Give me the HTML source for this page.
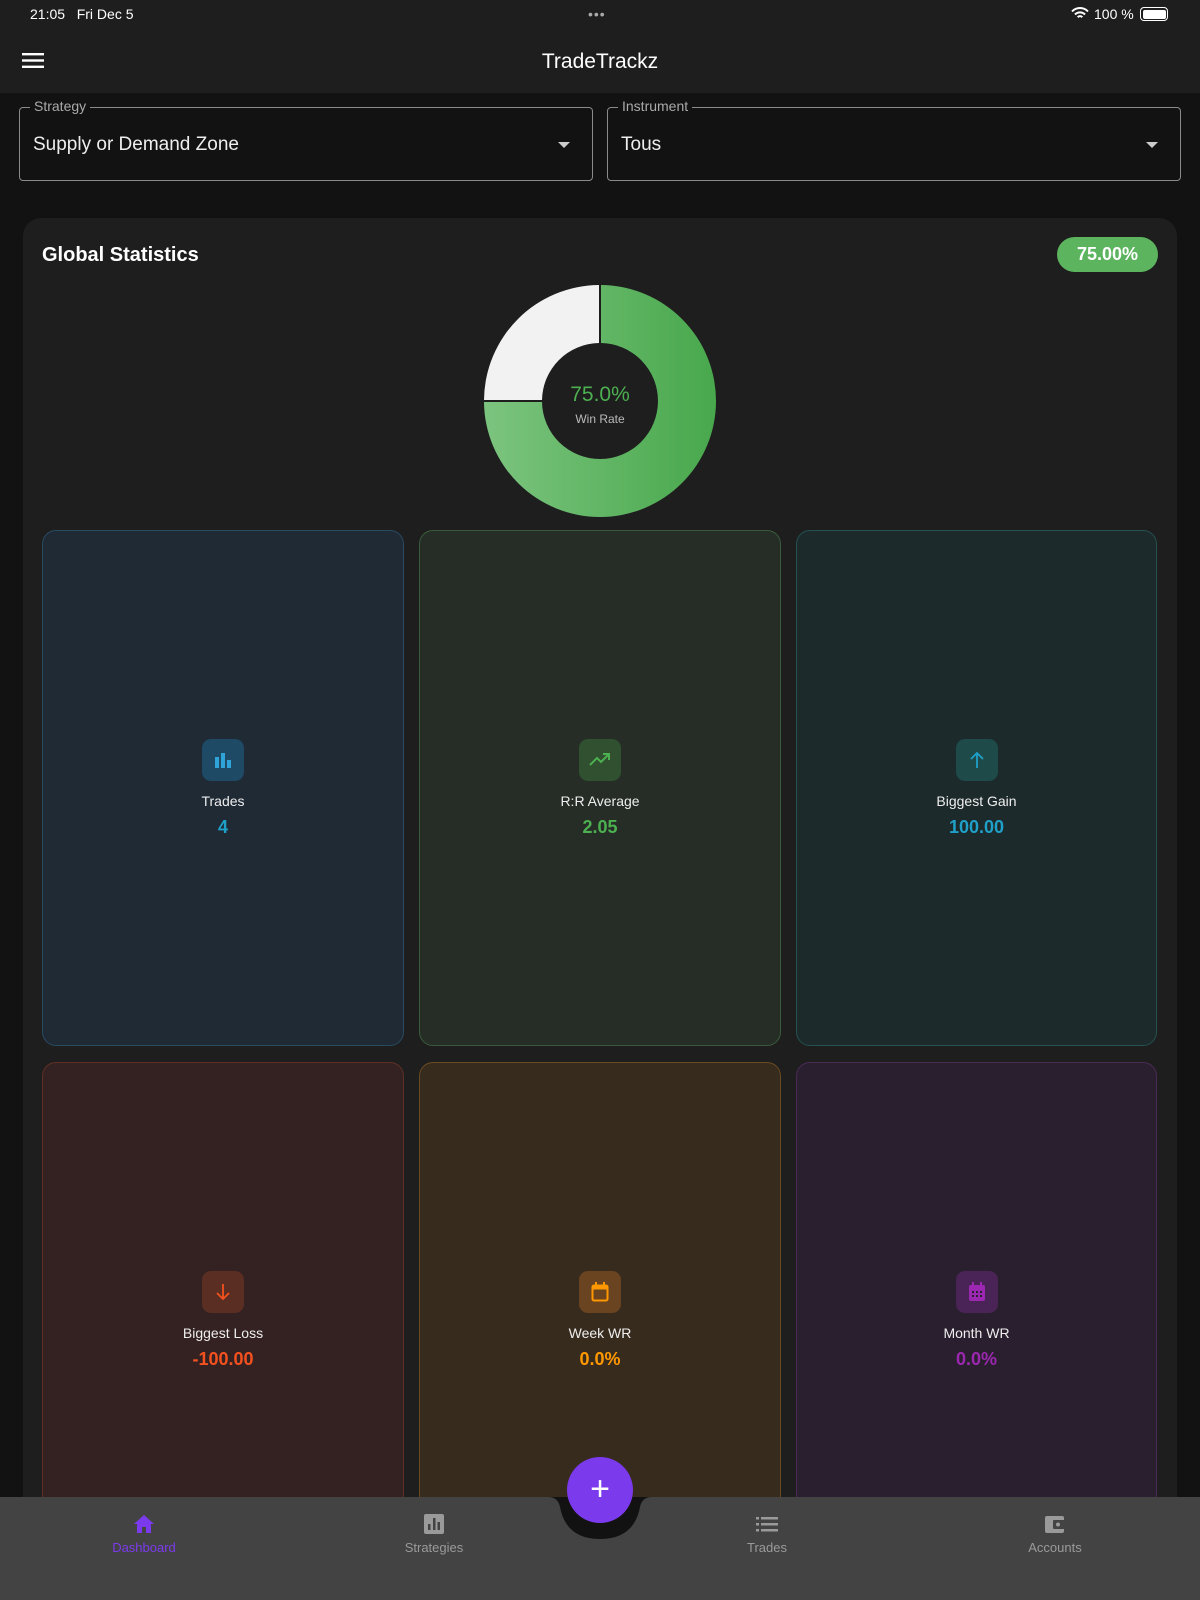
<!DOCTYPE html>
<html><head><meta charset="utf-8"><style>
*{box-sizing:border-box;margin:0;padding:0}
html,body{width:1200px;height:1600px;overflow:hidden}
body{background:#121212;font-family:"Liberation Sans",sans-serif;color:#fff;position:relative}
.abs{position:absolute}
.status{top:0;left:0;width:1200px;height:93px;background:#1e1e1e}
.dd{top:107px;height:74px;border:1px solid #8a8a8a;border-radius:4px;background:#121212}
.dd .lab{position:absolute;top:-10px;left:10px;background:#121212;padding:0 4px;font-size:14px;color:#aaa}
.dd .val{position:absolute;left:13px;top:26px;font-size:19px;color:#eee}
.dd .arr{position:absolute;right:22px;top:34px;width:0;height:0;border-left:6px solid transparent;border-right:6px solid transparent;border-top:6px solid #ccc}
.card{left:23px;top:218px;width:1154px;height:1382px;background:#1e1e1e;border-radius:18px 18px 0 0}
.tile{border-radius:14px;border:1px solid}
.tile .ic{position:absolute;left:50%;margin-left:-21px;width:42px;height:42px;border-radius:9px;display:flex;align-items:center;justify-content:center}
.tile .t{position:absolute;width:100%;text-align:center;font-size:14px;color:#eee}
.tile .v{position:absolute;width:100%;text-align:center;font-size:18px;font-weight:bold}
.nav{left:0;top:1497px;width:1200px;height:103px;background:#434343}
.ni{position:absolute;top:1514px;width:120px;margin-left:-60px;text-align:center;font-size:13px;color:#9a9a9a}
.ni svg{display:block;margin:0 auto 6px}
</style></head><body>
<div class="abs status"></div>
<div class="abs" style="left:30px;top:6px;font-size:14px;color:#fff">21:05&nbsp;&nbsp; Fri Dec 5</div>
<div class="abs" style="left:588px;top:6px;font-size:14px;color:#aaa;letter-spacing:1px">•••</div>
<div class="abs" style="left:1094px;top:6px;font-size:14px;color:#fff">100 %</div>
<svg class="abs" style="left:1071px;top:7px" width="18" height="13" viewBox="0 0 18 13"><path d="M1 4.5a11 11 0 0 1 16 0M4 7.5a7 7 0 0 1 10 0M6.7 10.2a3 3 0 0 1 4.6 0" stroke="#fff" stroke-width="2" fill="none"/></svg>
<div class="abs" style="left:1140px;top:7px;width:28px;height:14px;border:1.5px solid #fff;border-radius:4px;padding:1.5px"><div style="width:100%;height:100%;background:#fff;border-radius:2px"></div></div>
<svg class="abs" style="left:22px;top:52px" width="22" height="17"><rect y="1" width="22" height="2.4" fill="#fff"/><rect y="7.3" width="22" height="2.4" fill="#fff"/><rect y="13.6" width="22" height="2.4" fill="#fff"/></svg>
<div class="abs" style="left:0;width:1200px;top:50px;text-align:center;font-size:21px;color:#fff">TradeTrackz</div>

<div class="abs dd" style="left:19px;width:574px"><span class="lab">Strategy</span><span class="val">Supply or Demand Zone</span><span class="arr"></span></div>
<div class="abs dd" style="left:607px;width:574px"><span class="lab">Instrument</span><span class="val">Tous</span><span class="arr"></span></div>

<div class="abs card"></div>
<div class="abs" style="left:42px;top:244px;font-size:20px;font-weight:bold">Global Statistics</div>
<div class="abs" style="left:1057px;top:237px;width:101px;height:35px;border-radius:18px;background:#5cb45f;font-size:18px;font-weight:bold;text-align:center;line-height:35px">75.00%</div>

<svg class="abs" style="left:482px;top:283px" width="236" height="236" viewBox="-118 -118 236 236">
<defs><linearGradient id="g" x1="0" x2="1"><stop offset="0" stop-color="#7cc47f"/><stop offset="1" stop-color="#48a84c"/></linearGradient></defs>
<path d="M1 -116 A116 116 0 1 1 -116 1 L-58 1 A58 58 0 1 0 1 -58Z" fill="url(#g)"/>
<path d="M-116 -1 A116 116 0 0 1 -1 -116 L-1 -58 A58 58 0 0 0 -58 -1Z" fill="#f2f2f2"/>
<text x="0" y="0" text-anchor="middle" font-family="Liberation Sans" font-size="21" fill="#4caf50">75.0%</text>
<text x="0" y="22" text-anchor="middle" font-family="Liberation Sans" font-size="12" fill="#bbb">Win Rate</text>
</svg>

<div class="abs tile" style="left:42px;top:530px;width:362px;height:516px;background:#1f2a35;border-color:#2a4a62">
 <div class="ic" style="top:208px;background:#1e4a66"><svg width="18" height="16"><rect x="1" y="5" width="4" height="11" fill="#2ea4d8"/><rect x="7" y="1" width="4" height="15" fill="#2ea4d8"/><rect x="13" y="8" width="4" height="8" fill="#2ea4d8"/></svg></div>
 <div class="t" style="top:262px">Trades</div><div class="v" style="top:286px;color:#1fa0c8">4</div></div>
<div class="abs tile" style="left:419px;top:530px;width:362px;height:516px;background:#252d26;border-color:#3a5c3c">
 <div class="ic" style="top:208px;background:#30502f"><svg width="22" height="14"><path d="M1 12l7-7 4 4 8-8M14 1h6v6" stroke="#4caf50" stroke-width="2" fill="none"/></svg></div>
 <div class="t" style="top:262px">R:R Average</div><div class="v" style="top:286px;color:#4caf50">2.05</div></div>
<div class="abs tile" style="left:796px;top:530px;width:361px;height:516px;background:#1d2a2b;border-color:#24504f">
 <div class="ic" style="top:208px;background:#1f4a4a"><svg width="16" height="18"><path d="M8 17V2M2 8l6-6 6 6" stroke="#1fa0c8" stroke-width="1.8" fill="none"/></svg></div>
 <div class="t" style="top:262px">Biggest Gain</div><div class="v" style="top:286px;color:#1fa0c8">100.00</div></div>
<div class="abs tile" style="left:42px;top:1062px;width:362px;height:516px;background:#342222;border-color:#5e3025">
 <div class="ic" style="top:208px;background:#5a2e22"><svg width="16" height="18"><path d="M8 1v15M2 10l6 6 6-6" stroke="#f4511e" stroke-width="1.8" fill="none"/></svg></div>
 <div class="t" style="top:262px">Biggest Loss</div><div class="v" style="top:286px;color:#f4511e">-100.00</div></div>
<div class="abs tile" style="left:419px;top:1062px;width:362px;height:516px;background:#372b1e;border-color:#6a4a22">
 <div class="ic" style="top:208px;background:#6a4420"><svg width="18" height="20"><rect x="1.5" y="3.5" width="15" height="15" rx="1.5" stroke="#ff9800" stroke-width="2" fill="none"/><rect x="1.5" y="3.5" width="15" height="4" fill="#ff9800"/><rect x="4" y="0" width="2" height="4" fill="#ff9800"/><rect x="12" y="0" width="2" height="4" fill="#ff9800"/></svg></div>
 <div class="t" style="top:262px">Week WR</div><div class="v" style="top:286px;color:#ff9800">0.0%</div></div>
<div class="abs tile" style="left:796px;top:1062px;width:361px;height:516px;background:#2a1f2f;border-color:#4c2a56">
 <div class="ic" style="top:208px;background:#4a2456"><svg width="18" height="20"><rect x="1" y="3" width="16" height="16" rx="2" fill="#9c27b0"/><g fill="#2a1f2f"><rect x="4" y="9" width="2" height="2"/><rect x="8" y="9" width="2" height="2"/><rect x="12" y="9" width="2" height="2"/><rect x="4" y="13" width="2" height="2"/><rect x="8" y="13" width="2" height="2"/><rect x="12" y="13" width="2" height="2"/></g><rect x="4" y="0" width="2" height="4" fill="#9c27b0"/><rect x="12" y="0" width="2" height="4" fill="#9c27b0"/></svg></div>
 <div class="t" style="top:262px">Month WR</div><div class="v" style="top:286px;color:#9c27b0">0.0%</div></div>

<div class="abs nav"></div>
<svg class="abs" style="left:548px;top:1497px" width="104" height="44" viewBox="0 0 104 44"><path d="M0 0 Q10 0 12 10 Q18 42 52 42 Q86 42 92 10 Q94 0 104 0Z" fill="#121212"/></svg>
<div class="abs" style="left:567px;top:1457px;width:66px;height:66px;border-radius:50%;background:#7c3aed;color:#fff;font-size:34px;text-align:center;line-height:64px;font-weight:300">+</div>

<div class="ni" style="left:144px;color:#7c3aed"><svg width="22" height="20"><path d="M11 1L1 10h3v9h5v-6h4v6h5v-9h3z" fill="#7c3aed"/></svg>Dashboard</div>
<div class="ni" style="left:434px"><svg width="20" height="20"><rect x="0" y="0" width="20" height="20" rx="2" fill="#9a9a9a"/><rect x="4" y="10" width="2.5" height="6" fill="#434343"/><rect x="9" y="4" width="2.5" height="12" fill="#434343"/><rect x="13.5" y="8" width="2.5" height="8" fill="#434343"/></svg>Strategies</div>
<div class="ni" style="left:767px"><svg width="22" height="20"><g fill="#9a9a9a"><rect x="0" y="3" width="3" height="2.5"/><rect x="5" y="3" width="17" height="2.5"/><rect x="0" y="9" width="3" height="2.5"/><rect x="5" y="9" width="17" height="2.5"/><rect x="0" y="15" width="3" height="2.5"/><rect x="5" y="15" width="17" height="2.5"/></g></svg>Trades</div>
<div class="ni" style="left:1055px"><svg width="22" height="20"><rect x="1" y="2" width="19" height="17" rx="2" fill="#9a9a9a"/><rect x="9" y="6" width="12" height="9" rx="1" fill="#434343"/><circle cx="14" cy="10.5" r="2" fill="#9a9a9a"/></svg>Accounts</div>
</body></html>
